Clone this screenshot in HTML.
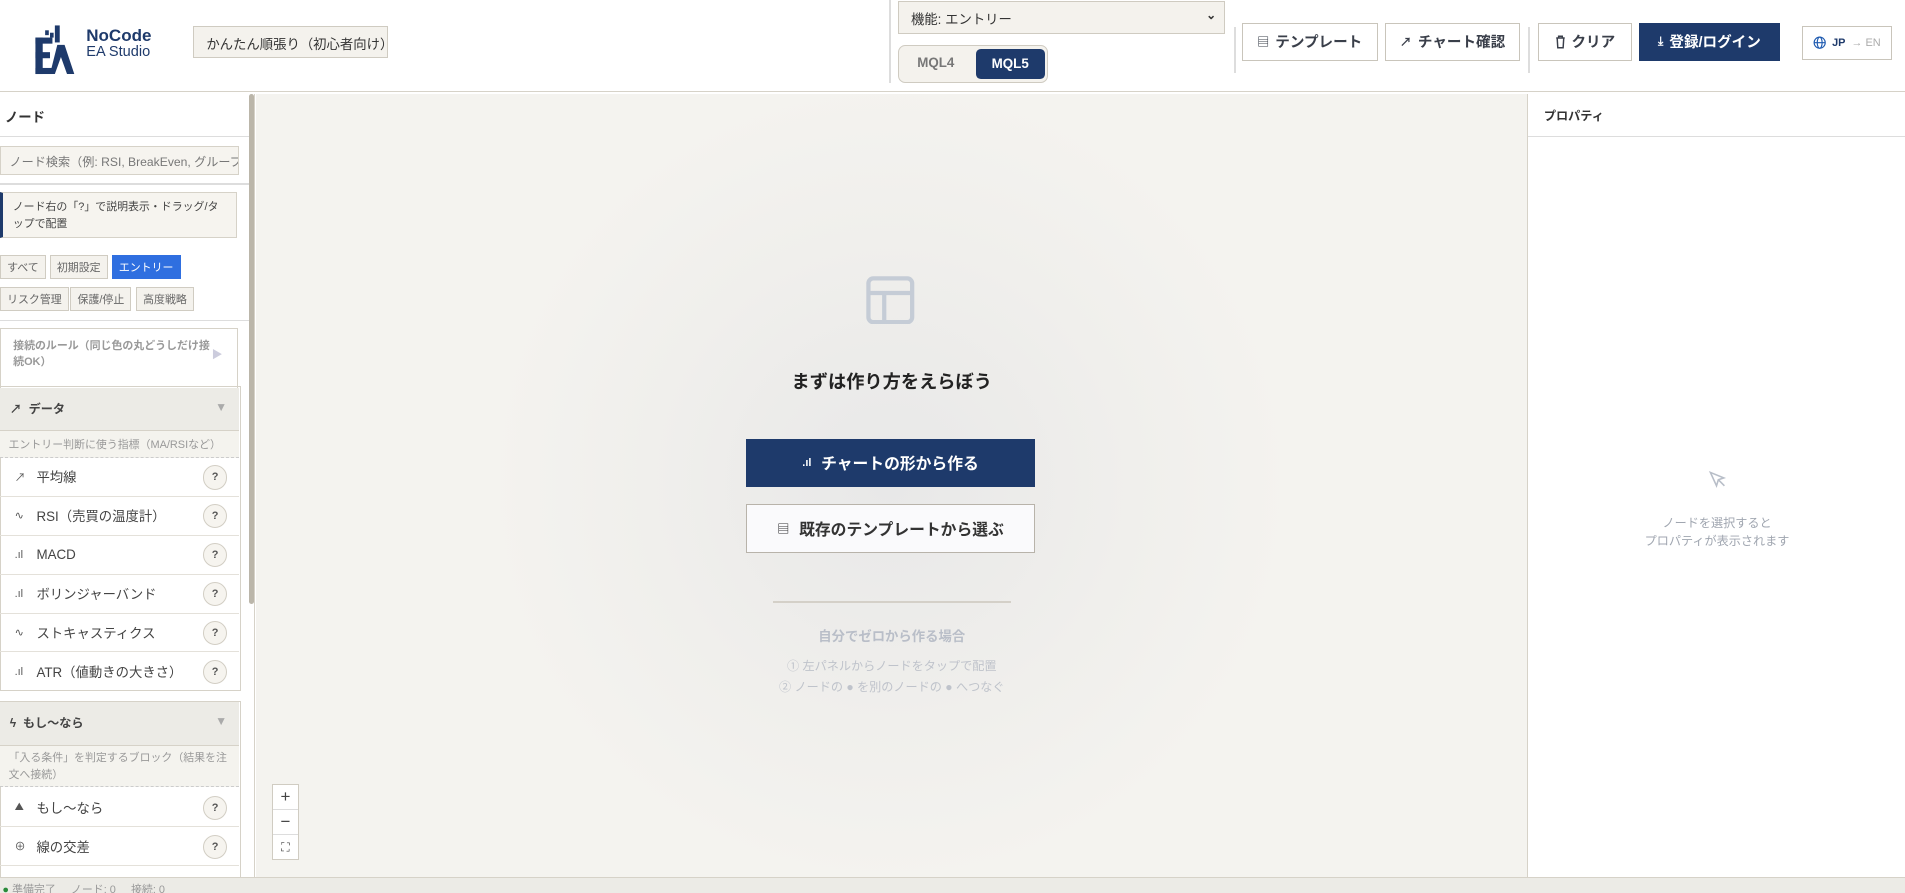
<!DOCTYPE html>
<html><head><meta charset="utf-8"><style>
*{box-sizing:border-box;margin:0;padding:0}
html,body{width:1905px;height:893px;overflow:hidden;background:#fff}
#r{width:1568px;height:735px;zoom:1.21492;position:relative;font-family:"Liberation Sans","Noto Sans CJK JP",sans-serif;color:#333;overflow:hidden}
.a{position:absolute}
.hdr{left:0;top:0;width:1568px;height:76px;background:#fff;border-bottom:1px solid #d6d2c8}
.btn{position:absolute;top:19px;height:31px;border:1px solid #c9c5bb;background:#fff;font-size:12px;font-weight:bold;color:#3a3f4a;display:flex;align-items:center;justify-content:center;gap:5px}
.lp{left:0;top:77px;width:210px;height:645px;background:#fff;border-right:1px solid #d6d2c8}
.tag{position:absolute;height:20px;border:1px solid #d0ccc2;background:#f4f2ed;font-size:9px;color:#666;display:flex;align-items:center;padding:0 5px}
.item{position:absolute;left:0;width:197px;height:32px;border-bottom:1px solid #e4e1da;font-size:11px;color:#444;display:flex;align-items:center;padding-left:12px}
.item i{font-style:normal;width:18px;font-size:9px;color:#555}
.q{position:absolute;right:10px;top:6px;width:20px;height:20px;border-radius:50%;border:1px solid #d2cec4;background:#f6f4ef;font-size:9px;font-weight:bold;color:#555;display:flex;align-items:center;justify-content:center}
.cv{left:211px;top:77px;width:1046px;height:645px;background:radial-gradient(circle at 522px 320px,#e8e8e8 0,#f0efec 200px,#f4f3ef 330px);background-color:#f4f3ef}
.rp{left:1257px;top:77px;width:311px;height:645px;background:#fff;border-left:1px solid #d6d2c8}
</style></head><body><div id="r">
<div class="a hdr">
 <svg class="a" style="left:27px;top:19px" width="42" height="44" viewBox="0 0 42 44"><g fill="#1e3a6b"><rect x="2" y="12" width="6" height="30"/><rect x="2" y="12" width="14" height="5"/><rect x="2" y="24" width="12" height="5"/><rect x="2" y="37" width="14" height="5"/><rect x="10" y="6" width="3" height="4"/><rect x="14" y="8" width="3" height="4"/><rect x="18" y="2" width="4" height="14"/><polygon points="20,18 26,18 34,42 28,42 23,28 18,42 14,42"/></g></svg>
 <div class="a" style="left:71px;top:22px;font-size:14px;font-weight:bold;color:#1e3a6b;line-height:14px">NoCode</div>
 <div class="a" style="left:71px;top:37px;font-size:12px;color:#1e3a6b;line-height:13px">EA Studio</div>
 <div class="a" style="left:159px;top:21px;width:160px;height:27px;border:1px solid #cfcbc1;background:#f4f2ed;font-size:11px;padding:6px 10px;white-space:nowrap;overflow:hidden;color:#333">かんたん順張り（初心者向け）</div>
 <div class="a" style="left:732px;top:0;width:1px;height:68px;background:#ddd"></div>
 <div class="a" style="left:739px;top:1px;width:269px;height:27px;border:1px solid #cfcbc1;background:#f4f2ed;font-size:11px;padding:6px 10px;color:#333">機能: エントリー<span style="position:absolute;right:6px;top:5px;font-size:10px;font-weight:bold">⌄</span></div>
 <div class="a" style="left:739px;top:37px;width:124px;height:31px;border:1px solid #cfcbc1;border-radius:6px;background:#f4f2ed"></div>
 <div class="a" style="left:755px;top:45px;font-size:11px;font-weight:bold;color:#777">MQL4</div>
 <div class="a" style="left:803px;top:40px;width:57px;height:25px;border-radius:4px;background:#1e3a6b;color:#fff;font-size:11px;font-weight:bold;text-align:center;line-height:25px">MQL5</div>
 <div class="a" style="left:1016px;top:22px;width:1px;height:38px;background:#ddd"></div>
 <div class="btn" style="left:1022px;width:112px"><span style="font-size:10px">▤</span>テンプレート</div>
 <div class="btn" style="left:1140px;width:111px"><span style="font-size:10px">↗</span>チャート確認</div>
 <div class="a" style="left:1258px;top:22px;width:1px;height:38px;background:#ddd"></div>
 <div class="btn" style="left:1266px;width:77px"><svg width="9" height="11" viewBox="0 0 9 11" fill="none" stroke="#3a3f4a" stroke-width="1.2"><path d="M1 2.5h7M3 2.5V1h3v1.5M1.8 2.5l.5 8h4.4l.5-8"/></svg>クリア</div>
 <div class="btn" style="left:1349px;width:116px;background:#1e3a6b;border-color:#1e3a6b;color:#fff"><span style="font-size:10px">⤓</span>登録/ログイン</div>
 <div class="btn" style="left:1483px;width:74px;height:28px;top:21px;font-size:9px;color:#1e3a6b"><svg width="11" height="11" viewBox="0 0 12 12" fill="none" stroke="#1e5ab0" stroke-width="1"><circle cx="6" cy="6" r="5"/><ellipse cx="6" cy="6" rx="2.2" ry="5"/><path d="M1 6h10"/></svg>JP <span style="color:#aaa;font-weight:normal">→ EN</span></div>
</div>
<div class="a lp">
 <div class="a" style="left:4px;top:11px;font-size:11px;font-weight:bold">ノード</div>
 <div class="a" style="left:0;top:35px;width:205px;height:1px;background:#ddd"></div>
 <div class="a" style="left:0;top:43px;width:197px;height:24px;border:1px solid #d6d2c8;background:#f6f4ef;font-size:10px;color:#777;padding:5px 7px;white-space:nowrap;overflow:hidden">ノード検索（例: RSI, BreakEven, グループ</div>
 <div class="a" style="left:0;top:74px;width:205px;height:1px;background:#ddd"></div>
 <div class="a" style="left:0;top:81px;width:195px;height:38px;border:1px solid #d6d2c8;border-left:3px solid #1e3a6b;background:#f6f4ef;font-size:9px;color:#444;padding:5px 8px;line-height:14px">ノード右の「?」で説明表示・ドラッグ/タップで配置</div>
 <div class="tag" style="left:0;top:133px">すべて</div>
 <div class="tag" style="left:41px;top:133px">初期設定</div>
 <div class="tag" style="left:92px;top:133px;background:#2f6fe0;color:#fff;border-color:#2f6fe0">エントリー</div>
 <div class="tag" style="left:0;top:159px">リスク管理</div>
 <div class="tag" style="left:58px;top:159px">保護/停止</div>
 <div class="tag" style="left:112px;top:159px">高度戦略</div>
 <div class="a" style="left:0;top:186px;width:205px;height:1px;background:#ddd"></div>
 <div class="a" style="left:0;top:193px;width:196px;height:50px;border:1px solid #d6d2c8;font-size:9px;font-weight:bold;color:#999;padding:8px 22px 8px 10px;line-height:13px">接続のルール（同じ色の丸どうしだけ接続OK）<span style="position:absolute;right:12px;top:16px;color:#ccd">▶</span></div>
 <div class="a" style="left:0;top:241px;width:198px;height:251px;border:1px solid #d6d2c8"></div>
 <div class="a" style="left:0;top:242px;width:197px;height:36px;background:#ecebe6;border-bottom:1px solid #d6d2c8;font-size:10px;font-weight:bold;color:#444;padding:10px 8px">↗&nbsp; データ<span style="position:absolute;right:10px;top:10px;color:#aaa">▼</span></div>
 <div class="a" style="left:0;top:278px;width:197px;height:22px;background:#f4f3ee;border-bottom:1px dashed #ccc;font-size:9px;color:#999;padding:4px 7px">エントリー判断に使う指標（MA/RSIなど）</div>
 <div class="item" style="top:300px"><i>↗</i>平均線<div class="q">?</div></div>
 <div class="item" style="top:332px"><i>∿</i>RSI（売買の温度計）<div class="q">?</div></div>
 <div class="item" style="top:364px"><i>.ıl</i>MACD<div class="q">?</div></div>
 <div class="item" style="top:396px"><i>.ıl</i>ボリンジャーバンド<div class="q">?</div></div>
 <div class="item" style="top:428px"><i>∿</i>ストキャスティクス<div class="q">?</div></div>
 <div class="item" style="top:460px;border-bottom:none"><i>.ıl</i>ATR（値動きの大きさ）<div class="q">?</div></div>
 <div class="a" style="left:0;top:500px;width:198px;height:150px;border:1px solid #d6d2c8"></div>
 <div class="a" style="left:0;top:501px;width:197px;height:36px;background:#ecebe6;border-bottom:1px solid #d6d2c8;font-size:10px;font-weight:bold;color:#444;padding:10px 8px">ϟ&nbsp; もし〜なら<span style="position:absolute;right:10px;top:10px;color:#aaa">▼</span></div>
 <div class="a" style="left:0;top:537px;width:197px;height:34px;background:#f4f3ee;border-bottom:1px dashed #ccc;font-size:9px;color:#999;padding:3px 7px;line-height:14px">「入る条件」を判定するブロック（結果を注文へ接続）</div>
 <div class="item" style="top:572px"><i>⛰</i>もし〜なら<div class="q">?</div></div>
 <div class="item" style="top:604px"><i>⊕</i>線の交差<div class="q">?</div></div>
 <div class="a" style="left:205px;top:0;width:4px;height:420px;background:#bbb6aa;border-radius:2px"></div>
</div>
<div class="a cv">
 <svg class="a" style="left:502px;top:150px" width="40" height="40" viewBox="0 0 40 40" fill="none" stroke="#c5ccd6" stroke-width="3.5"><rect x="2" y="2" width="36" height="36" rx="4"/><line x1="2" y1="14" x2="38" y2="14"/><line x1="15" y1="14" x2="15" y2="38"/></svg>
 <div class="a" style="left:0;width:1046px;top:226px;text-align:center;font-size:15px;font-weight:bold;color:#222">まずは作り方をえらぼう</div>
 <div class="a" style="left:403px;top:284px;width:238px;height:40px;background:#1e3a6b;color:#fff;font-size:13px;font-weight:bold;display:flex;align-items:center;justify-content:center;gap:8px"><span style="font-size:9px">.ıl</span>チャートの形から作る</div>
 <div class="a" style="left:403px;top:338px;width:238px;height:40px;background:#fafafc;border:1px solid #b8b3aa;color:#333;font-size:13px;font-weight:bold;display:flex;align-items:center;justify-content:center;gap:8px"><span style="font-size:10px">▤</span>既存のテンプレートから選ぶ</div>
 <div class="a" style="left:425px;top:418px;width:196px;height:1px;background:#d4d0c8"></div>
 <div class="a" style="left:0;width:1046px;top:438px;text-align:center;font-size:11px;font-weight:bold;color:#b9bec8">自分でゼロから作る場合</div>
 <div class="a" style="left:0;width:1046px;top:463px;text-align:center;font-size:10px;color:#bfc3cb;line-height:17px">① 左パネルからノードをタップで配置<br>② ノードの ● を別のノードの ● へつなぐ</div>
 <div class="a" style="left:13px;top:568px;width:22px;height:63px;border:1px solid #d0ccc2;background:#fff;font-size:14px;color:#444;text-align:center;line-height:20px">+<div style="border-top:1px solid #ddd">−</div><div style="border-top:1px solid #ddd;font-size:10px">⛶</div></div>
</div>
<div class="a rp">
 <div class="a" style="left:13px;top:11px;font-size:10px;font-weight:bold;color:#333">プロパティ</div>
 <div class="a" style="left:0;top:35px;width:311px;height:1px;background:#ddd"></div>
 <svg class="a" style="left:148px;top:310px" width="16" height="16" viewBox="0 0 16 16" fill="none" stroke="#b8bec8" stroke-width="1.3"><path d="M2 2l11 4.5-4.5 1.5L7 13z M8.5 8l5 5"/></svg>
 <div class="a" style="left:0;width:311px;top:346px;text-align:center;font-size:10px;color:#a0a6b0;line-height:15px">ノードを選択すると<br>プロパティが表示されます</div>
</div>
<div class="a" style="left:0;top:722px;width:1568px;height:13px;background:#ecebe6;border-top:1px solid #d6d2c8;font-size:9px;color:#999;padding-left:2px;line-height:20px"><span style="color:#2a8a3a">●</span> 準備完了 &nbsp;&nbsp;&nbsp; ノード: 0 &nbsp;&nbsp;&nbsp; 接続: 0</div>
</div></body></html>
